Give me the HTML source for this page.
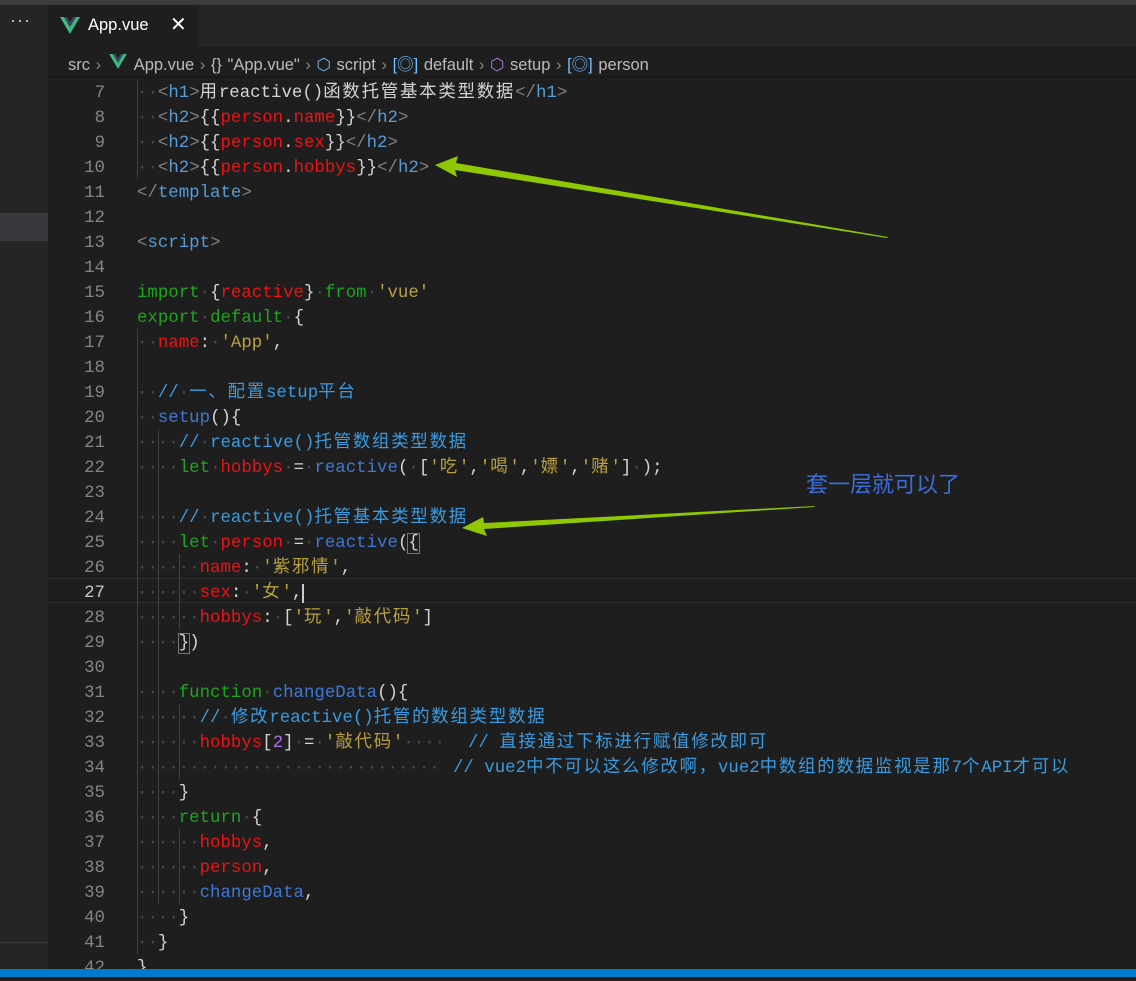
<!DOCTYPE html>
<html><head><meta charset="utf-8"><style>
*{margin:0;padding:0;box-sizing:border-box}
body{width:1136px;height:977px;background:#1e1e1e;overflow:hidden;position:relative;font-family:"Liberation Sans","Noto Sans CJK SC",sans-serif}
.abs{position:absolute}
.code{position:absolute;left:137px;font-family:"Liberation Mono","Noto Sans CJK SC",monospace;font-size:17.4px;white-space:pre;height:25px;line-height:25px;color:#d4d4d4}
.ln{position:absolute;left:48px;width:57px;text-align:right;font-family:"Liberation Mono",monospace;font-size:17.4px;line-height:25px;color:#858585}
.t{color:#569cd6}.p{color:#808080}.r{color:#ee1111}.g{color:#1da51d}.b{color:#3f78d4}.c{color:#3a9be0}.s{color:#b8a040}.d{color:#4a4a4a}.n{color:#a970e8}
.k{letter-spacing:1.8px}
.guide{position:absolute;width:1px;background:#404040}
</style></head><body>
<div class="abs" style="left:0;top:0;width:1136px;height:5px;background:#3c3c3c"></div>
<div class="abs" style="left:0;top:5px;width:1136px;height:42px;background:#252526"></div>
<div class="abs" style="left:0;top:5px;width:48px;height:972px;background:#252526"></div>
<div class="abs" style="left:0;top:213px;width:48px;height:28px;background:#37373d"></div>
<div class="abs" style="left:0;top:942px;width:48px;height:1px;background:#3a3a3a"></div>
<div class="abs" style="left:10px;top:10px;color:#ccc;font-size:18px;letter-spacing:1px">···</div>
<div class="abs" style="left:48px;top:5px;width:151px;height:42px;background:#1e1e1e"></div>
<svg class="abs" style="left:60px;top:17px" width="20" height="17" viewBox="0 0 20 17"><path d="M0 0h4l6 10 6-10h4L10 17z" fill="#41b883"/><path d="M4 0h3l3 5 3-5h3L10 10z" fill="#34495e"/></svg>
<div class="abs" style="left:88px;top:16px;color:#fff;font-size:16.5px">App.vue</div>
<div class="abs" style="left:170px;top:12px;color:#fff;font-size:20px">✕</div>
<div class="abs" style="left:48px;top:76px;width:1088px;height:2px;background:#191919"></div>
<svg class="abs" style="left:109px;top:54px" width="18" height="15" viewBox="0 0 20 17"><path d="M0 0h4l6 10 6-10h4L10 17z" fill="#41b883"/><path d="M4 0h3l3 5 3-5h3L10 10z" fill="#34495e"/></svg>
<div class="abs" style="left:68px;top:51px;color:#bbb;font-size:16.5px;white-space:pre;word-spacing:1px">src <span style="color:#888">›</span>      App.vue <span style="color:#888">›</span> {} "App.vue" <span style="color:#888">›</span> <span style="color:#75beff">⬡</span> script <span style="color:#888">›</span> <span style="color:#75beff">[◎]</span> default <span style="color:#888">›</span> <span style="color:#b180d7">⬡</span> setup <span style="color:#888">›</span> <span style="color:#75beff">[◎]</span> person</div>
<div class="abs" style="left:48px;top:578px;width:1088px;height:25px;border-top:1px solid #2e2e2e;border-bottom:1px solid #2e2e2e"></div>
<div class="guide" style="left:137px;top:79px;height:100px"></div>
<div class="guide" style="left:137px;top:329px;height:625px"></div>
<div class="guide" style="left:158px;top:429px;height:475px"></div>
<div class="guide" style="left:179px;top:554px;height:75px"></div>
<div class="guide" style="left:179px;top:704px;height:75px"></div>
<div class="guide" style="left:179px;top:829px;height:75px"></div>
<div id="L"></div>
<div class="abs" style="left:0;top:969px;width:1136px;height:8px;background:#007acc"></div>
<svg class="abs" style="left:0;top:0" width="1136" height="977">
<polygon points="888,237 887,238 455,170 457,177 435,165 458,156 456,163" fill="#8fc800"/>
<polygon points="815,506 814,507 484,529 487,536 462,528 483,517 484,523" fill="#8fc800"/>
</svg>
<div class="abs" style="left:806px;top:467px;color:#3a6fd8;font-size:22px;font-family:'Noto Sans CJK SC',sans-serif">套一层就可以了</div>
<script>
const D='<span class="d">·</span>';
function dd(n){return D.repeat(n)}
function cj(s){return s.replace(/[\u3000-\u9fff\uff00-\uffef]+/g,m=>'<span class="k">'+m+'</span>')}
const L=[
[7,dd(2)+'<span class="p">&lt;</span><span class="t">h1</span><span class="p">&gt;</span>用reactive()函数托管基本类型数据<span class="p">&lt;/</span><span class="t">h1</span><span class="p">&gt;</span>'],
[8,dd(2)+'<span class="p">&lt;</span><span class="t">h2</span><span class="p">&gt;</span>{{<span class="r">person</span>.<span class="r">name</span>}}<span class="p">&lt;/</span><span class="t">h2</span><span class="p">&gt;</span>'],
[9,dd(2)+'<span class="p">&lt;</span><span class="t">h2</span><span class="p">&gt;</span>{{<span class="r">person</span>.<span class="r">sex</span>}}<span class="p">&lt;/</span><span class="t">h2</span><span class="p">&gt;</span>'],
[10,dd(2)+'<span class="p">&lt;</span><span class="t">h2</span><span class="p">&gt;</span>{{<span class="r">person</span>.<span class="r">hobbys</span>}}<span class="p">&lt;/</span><span class="t">h2</span><span class="p">&gt;</span>'],
[11,'<span class="p">&lt;/</span><span class="t">template</span><span class="p">&gt;</span>'],
[12,''],
[13,'<span class="p">&lt;</span><span class="t">script</span><span class="p">&gt;</span>'],
[14,''],
[15,'<span class="g">import</span>'+D+'{<span class="r">reactive</span>}'+D+'<span class="g">from</span>'+D+'<span class="s">\'vue\'</span>'],
[16,'<span class="g">export</span>'+D+'<span class="g">default</span>'+D+'{'],
[17,dd(2)+'<span class="r">name</span>:'+D+'<span class="s">\'App\'</span>,'],
[18,''],
[19,dd(2)+'<span class="c">//'+D+'一、配置setup平台</span>'],
[20,dd(2)+'<span class="b">setup</span>(){'],
[21,dd(4)+'<span class="c">//'+D+'reactive()托管数组类型数据</span>'],
[22,dd(4)+'<span class="g">let</span>'+D+'<span class="r">hobbys</span>'+D+'='+D+'<span class="b">reactive</span>('+D+'[<span class="s">\'吃\'</span>,<span class="s">\'喝\'</span>,<span class="s">\'嫖\'</span>,<span class="s">\'赌\'</span>]'+D+');'],
[23,''],
[24,dd(4)+'<span class="c">//'+D+'reactive()托管基本类型数据</span>'],
[25,dd(4)+'<span class="g">let</span>'+D+'<span class="r">person</span>'+D+'='+D+'<span class="b">reactive</span>(<span style="outline:1px solid #777">{</span>'],
[26,dd(6)+'<span class="r">name</span>:'+D+'<span class="s">\'紫邪情\'</span>,'],
[27,dd(6)+'<span class="r">sex</span>:'+D+'<span class="s">\'女\'</span>,<span style="border-left:2px solid #ccc"></span>'],
[28,dd(6)+'<span class="r">hobbys</span>:'+D+'[<span class="s">\'玩\'</span>,<span class="s">\'敲代码\'</span>]'],
[29,dd(4)+'<span style="outline:1px solid #777">}</span>)'],
[30,''],
[31,dd(4)+'<span class="g">function</span>'+D+'<span class="b">changeData</span>(){'],
[32,dd(6)+'<span class="c">//'+D+'修改reactive()托管的数组类型数据</span>'],
[33,dd(6)+'<span class="r">hobbys</span>[<span class="n">2</span>]'+D+'='+D+'<span class="s">\'敲代码\'</span>'+dd(4)],
[34,dd(29)],
[35,dd(4)+'}'],
[36,dd(4)+'<span class="g">return</span>'+D+'{'],
[37,dd(6)+'<span class="r">hobbys</span>,'],
[38,dd(6)+'<span class="r">person</span>,'],
[39,dd(6)+'<span class="b">changeData</span>,'],
[40,dd(4)+'}'],
[41,dd(2)+'}'],
[42,'}']
];
let h='';
for(const [n,c] of L){const top=79+(n-7)*25;
h+='<div class="ln" style="top:'+(top+2)+'px'+(n==27?';color:#c6c6c6':'')+'">'+n+'</div><div class="code" style="top:'+(top+2)+'px">'+cj(c)+'</div>';}
h+='<div class="code c" style="left:468px;top:'+(81+26*25)+'px">'+cj('// 直接通过下标进行赋值修改即可')+'</div>';
h+='<div class="code c" style="left:453px;top:'+(81+27*25)+'px">'+cj('// vue2中不可以这么修改啊，vue2中数组的数据监视是那7个API才可以')+'</div>';
document.getElementById('L').outerHTML=h;
</script>
</body></html>
